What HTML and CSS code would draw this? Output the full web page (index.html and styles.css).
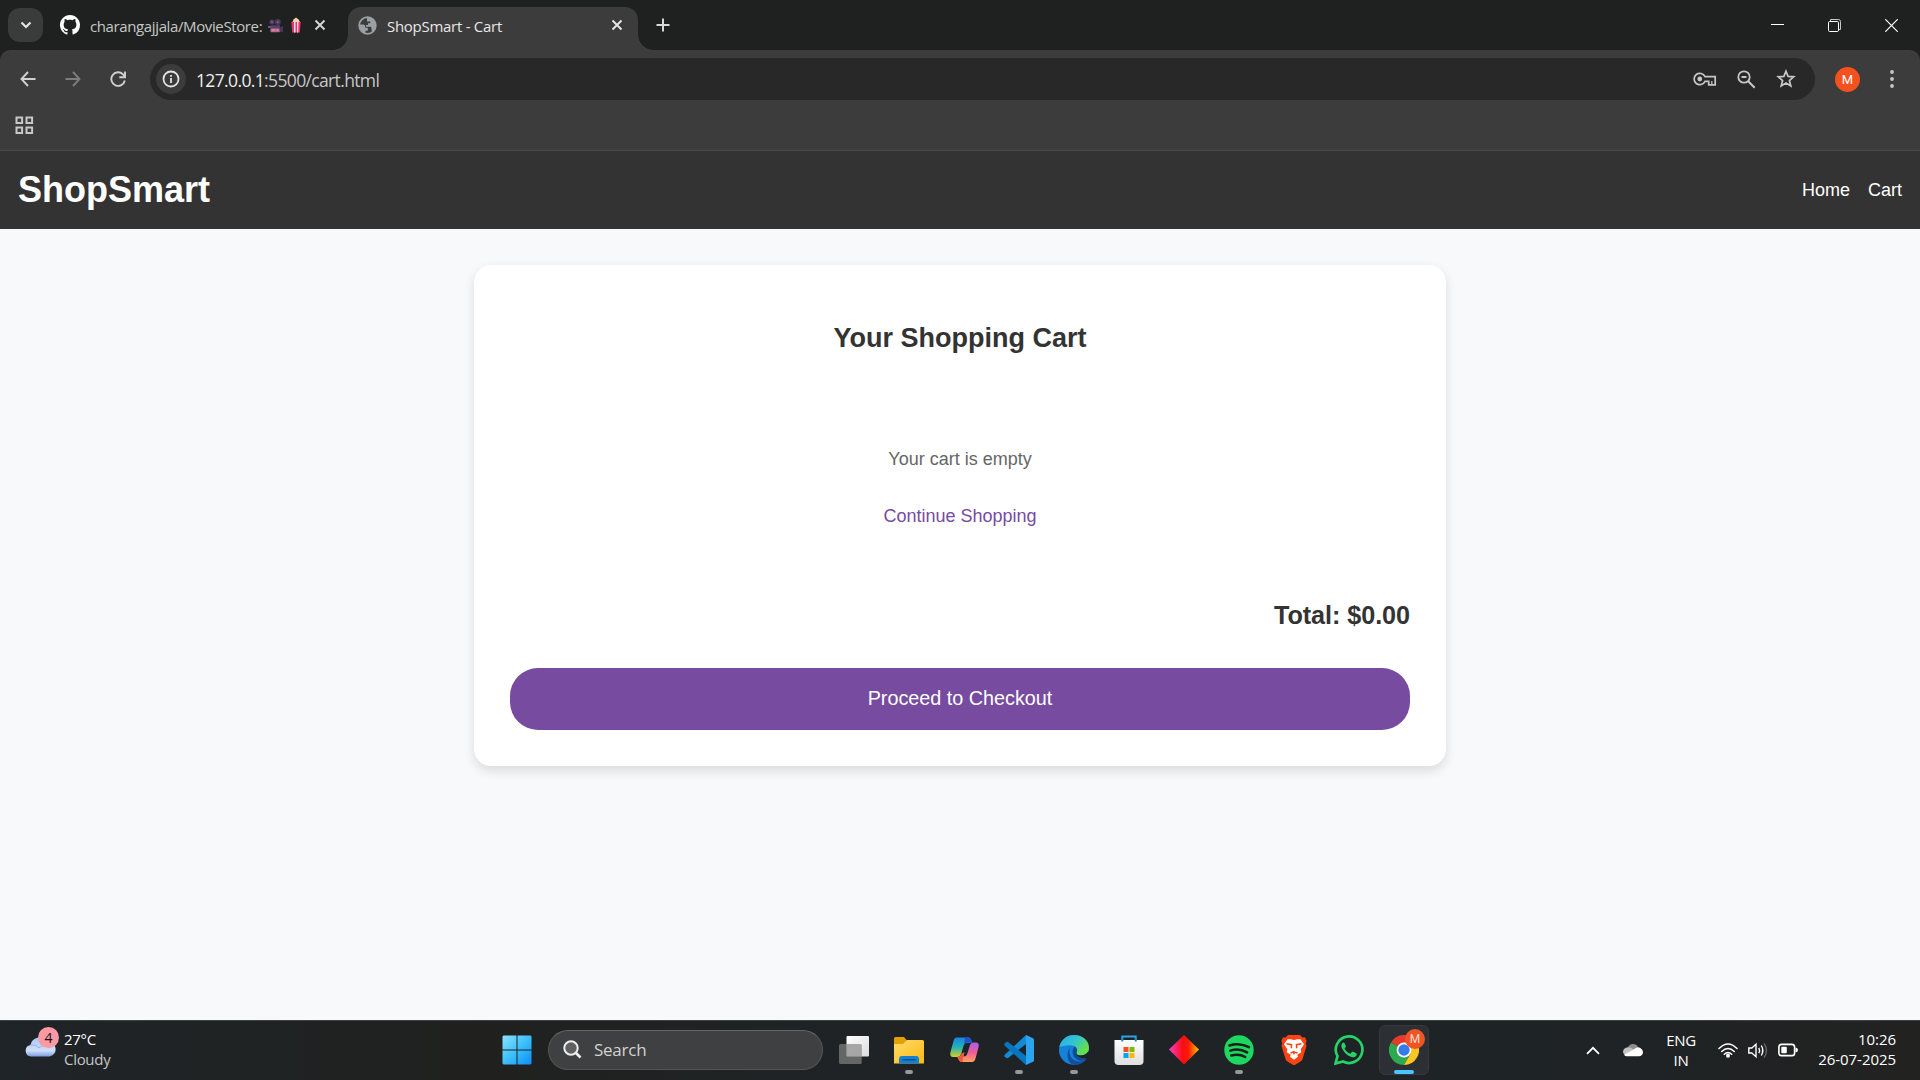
FILE: index.html
```html
<!DOCTYPE html>
<html lang="en">
<head>
<meta charset="utf-8">
<title>ShopSmart - Cart</title>
<link rel="stylesheet" href="styles.css">
</head>
<body>
<div class="tabstrip">
  <div class="tab-search"><svg width="12" height="8" viewBox="0 0 12 8"><path d="M1.5 1.5 6 6l4.500-4.500" fill="none" stroke="#e3e3e3" stroke-width="2.200"/></svg></div>
  <div class="tab tab-idle">
    <svg class="github" width="20" height="20" viewBox="0 0 16 16"><path fill="#fff" d="M8 0C3.580 0 0 3.580 0 8c0 3.540 2.290 6.530 5.470 7.590.4.070.55-.17.55-.38 0-.19-.01-.82-.01-1.490-2.010.37-2.530-.49-2.690-.94-.09-.23-.48-.94-.82-1.130-.28-.15-.68-.52-.01-.53.63-.01 1.080.58 1.230.82.72 1.210 1.870.87 2.330.66.07-.52.28-.87.51-1.070-1.780-.2-3.640-.89-3.640-3.950 0-.87.31-1.590.82-2.150-.08-.2-.36-1.020.08-2.120 0 0 .67-.21 2.200.82.64-.18 1.320-.27 2-.27s1.360.09 2 .27c1.530-1.040 2.200-.82 2.200-.82.44 1.100.16 1.920.08 2.120.51.56.82 1.270.82 2.150 0 3.070-1.870 3.750-3.650 3.950.29.25.54.73.54 1.480 0 1.070-.01 1.930-.01 2.200 0 .21.15.46.55.38A8 8 0 0 0 16 8c0-4.420-3.580-8-8-8z"/></svg>
    <span class="tab-text repo">charangajjala/MovieStore:</span>
    <svg class="camera" width="15" height="14" viewBox="0 0 15 14"><circle cx="4" cy="3" r="2.600" fill="#4b3b61"/><circle cx="9.800" cy="3" r="3" fill="#4b3b61"/><circle cx="4" cy="3" r=".9" fill="#75668c"/><circle cx="9.800" cy="3" r="1" fill="#75668c"/><path d="M0 7h3v2H0z" fill="#6b5a80"/><rect x="2.500" y="6.300" width="9.500" height="4" fill="#594468"/><rect x="2.500" y="9.500" width="9.500" height="3.800" rx=".8" fill="#b7688c"/><path d="M4 11h3M8.500 11h2" stroke="#f09bb0" stroke-width="1.200"/><path d="M11.500 8.500 15 7v6.500l-3.500-1z" fill="#45375a"/></svg>
    <svg class="popcorn" width="10" height="16" viewBox="0 0 10 16"><path d="M1 6 2.500 2.500 5 .5l2.500 2L9.500 6z" fill="#f6d3a2"/><path d="M.3 5h9.400L8.800 15.500H1.200z" fill="#e9326a"/><path d="M3 5h1.500v10.500H3zM6 5h1.500l-.3 10.500H6z" fill="#f6dfe9"/></svg>
    <svg class="close1" width="12" height="12" viewBox="0 0 12 12"><path d="M1.500 1.500l9 9m0-9l-9 9" stroke="#d5d7d6" stroke-width="1.900"/></svg>
  </div>
  <div class="tab tab-active">
    <svg width="19" height="19" viewBox="0 0 19 19"><circle cx="9.500" cy="9.500" r="8.300" fill="none" stroke="#9aa0a6" stroke-width="1.800"/><path fill="#9aa0a6" d="M9 1.500h3.500C16 3 17.500 6 17.500 9.500c0 2.500-1 4.500-2.500 6l-1.500-1v-2.500q0-1.200-1.300-1.200H8V9h2V7.300h2.200V5.400H9V3.500z"/><path fill="#9aa0a6" d="M1.500 8.500h3.700q2 0 2 2v1.200h2.600v3H7.500v2.600C4 16.500 1.500 13 1.500 8.500z"/></svg>
    <span class="tab-text cart-tab">ShopSmart - Cart</span>
    <svg class="close2" width="12" height="12" viewBox="0 0 12 12"><path d="M1.500 1.500l9 9m0-9l-9 9" stroke="#e6e8e7" stroke-width="1.900"/></svg>
  </div>
  <svg class="plus" width="14" height="14" viewBox="0 0 14 14"><path d="M7 .5v13M.5 7h13" stroke="#d8dad9" stroke-width="2"/></svg>
  <div class="window-controls">
    <svg width="13" height="13" viewBox="0 0 13 13"><path d="M0 5.500h13" stroke="#fff"/></svg>
    <svg width="13" height="13" viewBox="0 0 13 13"><path d="M2.500 2V.5h8a2 2 0 0 1 2 2v8H11" fill="none" stroke="#c9c9c9"/><rect x=".5" y="2.500" width="10" height="10" rx="1.200" fill="none" stroke="#fff"/></svg>
    <svg width="13" height="13" viewBox="0 0 13 13"><path d="M.3.3l12.400 12.400M12.700.3.3 12.700" stroke="#fff" stroke-width="1.200"/></svg>
  </div>
</div>
<div class="toolbar-wrap">
<div class="toolbar">
  <div class="nav-row">
    <svg width="16" height="16" viewBox="0 0 16 16"><path d="M8 1 1.500 8 8 15M1.500 8H15.500" fill="none" stroke="#d0d0d0" stroke-width="1.900"/></svg>
    <svg width="16" height="16" viewBox="0 0 16 16"><path d="M8 1l6.500 7L8 15M14.500 8H.5" fill="none" stroke="#7d7d7d" stroke-width="1.900"/></svg>
    <svg width="16" height="16" viewBox="0 0 16 16"><path d="M14.800 9.500A6.800 6.800 0 1 1 13 3.300L15 5.500" fill="none" stroke="#d0d0d0" stroke-width="1.900"/><path d="M15 .5V6.300H9.300" fill="none" stroke="#d0d0d0" stroke-width="1.900"/></svg>
    <div class="omnibox">
      <div class="site-info"><svg width="18" height="18" viewBox="0 0 18 18"><circle cx="9" cy="9" r="7.500" fill="none" stroke="#e3e3e3" stroke-width="1.800"/><path d="M9 8v5M9 5v1.800" stroke="#e3e3e3" stroke-width="1.800"/></svg></div>
      <span class="url"><b>127.0.0.1</b>:5500/cart.html</span>
      <div class="omni-icons">
        <svg width="24" height="14" viewBox="0 0 24 14"><path d="M12 4.600a5.700 5.700 0 1 0 0 4.800h3.700V12.800h6.500V4.600z" fill="none" stroke="#c7c7c7" stroke-width="1.700"/><circle cx="6.800" cy="7" r="2.400" fill="#c7c7c7"/><path d="M18.800 9v3.500" stroke="#c7c7c7" stroke-width="1.200"/></svg>
        <svg width="19" height="19" viewBox="0 0 19 19"><circle cx="7" cy="7" r="5.700" fill="none" stroke="#c7c7c7" stroke-width="1.800"/><path d="M4.500 7h5M11.200 11.200l6.500 6.500" stroke="#c7c7c7" stroke-width="2"/></svg>
        <svg width="20" height="20" viewBox="0 0 20 20"><path d="M10 2.200l2.100 5.200 5.600.4-4.300 3.700 1.400 5.500-4.800-3-4.800 3 1.400-5.500L2.300 7.800l5.600-.4z" fill="none" stroke="#c7c7c7" stroke-width="1.700"/></svg>
      </div>
    </div>
    <div class="avatar">M</div>
    <svg class="menu" width="4" height="18" viewBox="0 0 4 18"><g fill="#c7c7c7"><circle cx="2" cy="2" r="1.900"/><circle cx="2" cy="9" r="1.900"/><circle cx="2" cy="16" r="1.900"/></g></svg>
  </div>
  <div class="bookmarks"><svg width="19" height="19" viewBox="0 0 19 19"><g fill="none" stroke="#c7c7c7" stroke-width="2"><path d="M1.500 1.500h5.600v5.600H1.500zM11.500 1.500h5.600v5.600h-5.600zM1.500 11.500h5.600v5.600H1.500zM11.500 11.500h5.600v5.600h-5.600z"/></g></svg></div>
</div>
</div>
<header class="site-header">
  <h1>ShopSmart</h1>
  <nav><a>Home</a><a>Cart</a></nav>
</header>
<main class="page">
  <section class="card">
    <h2>Your Shopping Cart</h2>
    <p class="empty">Your cart is empty</p>
    <a class="continue">Continue Shopping</a>
    <div class="total">Total: $0.00</div>
    <button class="checkout">Proceed to Checkout</button>
  </section>
</main>
<footer class="taskbar">
  <div class="weather">
    <div class="weather-icon">
      <svg width="31" height="21" viewBox="0 0 31 21"><defs><linearGradient id="cl" x1="0" y1="0" x2="0" y2="1"><stop offset="0" stop-color="#a9c8f3"/><stop offset=".7" stop-color="#cfdefa"/><stop offset="1" stop-color="#7b9be0"/></linearGradient></defs><path d="M6 20.500a5.800 5.800 0 0 1-.5-11.500A9.500 9.500 0 0 1 23 6a7.300 7.300 0 0 1 1.500 14.500z" fill="url(#cl)"/><path d="M5.500 9c4-.5 7 1 8.500 3 2-2 5-3 8-2" fill="none" stroke="#8fb0ea" stroke-width="1"/></svg>
      <span class="count">4</span>
    </div>
    <div class="weather-text"><span>27°C</span><span class="dim">Cloudy</span></div>
  </div>
  <div class="apps">
    <div class="app start"><svg width="30" height="30" viewBox="0 0 30 30"><defs><linearGradient id="w" x1="0" y1="0" x2="1" y2="1"><stop offset="0" stop-color="#8be3ff"/><stop offset=".5" stop-color="#3cc0fb"/><stop offset="1" stop-color="#0b8ef5"/></linearGradient></defs><path fill="url(#w)" d="M1.500.5h13v14H.5V1.500zM15.500.5h13l1 1v13h-14zM.5 15.500h14v14h-13l-1-1zM15.500 15.500h14v13l-1 1h-13z"/></svg></div>
    <div class="search"><svg width="19" height="19" viewBox="0 0 19 19"><circle cx="8" cy="8" r="6.700" fill="#606060" stroke="#eee" stroke-width="2"/><path d="M13 13l4.500 4.500" stroke="#eee" stroke-width="2.600"/></svg><span>Search</span></div>
    <div class="app"><svg width="30" height="30" viewBox="0 0 30 30"><defs><linearGradient id="tv" x1="0" y1="0" x2="1" y2="1"><stop offset="0" stop-color="#fff"/><stop offset="1" stop-color="#dcdcdc"/></linearGradient></defs><rect x="7.500" y="1" width="22.500" height="20.500" rx="1" fill="url(#tv)"/><rect x="0" y="9" width="22.700" height="20" rx="1.500" fill="#777" fill-opacity=".8"/><path d="M7.500 9h15.200v12.500H7.500z" fill="#b3b3b3" fill-opacity=".65"/></svg></div>
    <div class="app running"><svg width="30" height="30" viewBox="0 0 30 30"><defs><linearGradient id="f" x1="0" y1="0" x2="1" y2="1"><stop offset="0" stop-color="#ffdb6b"/><stop offset="1" stop-color="#fdb912"/></linearGradient></defs><path d="M0 3.500Q0 2 1.500 2H10l3 3.500V12H0z" fill="#e3a008"/><path d="M0 9h9l4-4h15.500Q30 5 30 6.500V28.500H0z" fill="url(#f)"/><path d="M5 28.500V24q0-3 3-3h14q3 0 3 3v4.500z" fill="#1380d0"/><path d="M9 24.700h12" stroke="#0b4f96" stroke-width="1.500" stroke-linecap="round"/></svg></div>
    <div class="app"><svg width="29" height="27" viewBox="0 0 29 27"><defs><linearGradient id="c1" x1="0" y1="0" x2="0" y2="1"><stop offset="0" stop-color="#1585e8"/><stop offset=".5" stop-color="#23b3b4"/><stop offset="1" stop-color="#d8ce25"/></linearGradient><linearGradient id="c2" x1="0" y1="0" x2="0" y2="1"><stop offset="0" stop-color="#a75fed"/><stop offset=".5" stop-color="#ef5a9a"/><stop offset="1" stop-color="#ffa45a"/></linearGradient></defs><path d="M6 1.500H18q3 0 4 5l-4.500.5q-3-.5-4 3l-2.200 7.500Q10 21 7 21H3Q-.5 21 .5 16L3.500 5Q4.500 1.500 6 1.500z" fill="url(#c1)"/><path d="M15 1.500h3q3 0 4 5h-5q-2 0-3 2z" fill="#234fd0"/><path d="M23 6.500h3q3.500 0 2.500 5l-3 11Q24.500 26 22 26H12Q9 26 7.500 21q3 0 4.500-3.500l2.500-1.500-1 4.500q3 0 4-3.500l2.500-8q1-2.500 3-2.500z" fill="url(#c2)"/><path d="M7.500 21q3 0 4.500-4l2 .5-1.500 6.500.5 2Q9 26 7.500 21z" fill="#f0573b"/></svg></div>
    <div class="app running"><svg width="30" height="30" viewBox="0 0 30 30"><path d="M22 0 1 19.500q-1.500 1.500 0 2.500l1.500 1q1 .5 2-.3L22 9z" fill="#1489d4"/><path d="M22 30 1 11Q-.5 9.500 1 8l1.500-1q1-.5 2 .2L22 21z" fill="#0876be"/><path d="M22 0l7 3.200q1 .5 1 1.500v20.600q0 1-1 1.500L22 30z" fill="#29a5f1"/></svg></div>
    <div class="app running"><svg width="30" height="30" viewBox="0 0 30 30"><defs><linearGradient id="e1" x1="0" y1="0" x2="1" y2=".6"><stop offset="0" stop-color="#2aabee"/><stop offset=".5" stop-color="#30c4d4"/><stop offset="1" stop-color="#6be13f"/></linearGradient></defs><circle cx="15" cy="15" r="15" fill="#1582da"/><path d="M.4 12C2 4.500 8 0 15 0c9 0 15 6 15 12.500 0 5-4 8-8.500 8-3 0-5-1.200-4-2.800 1.300-1.800 1-6.200-4-7.200C8.500 9.500 3 11 .4 12z" fill="url(#e1)"/><path d="M11 12.500c-2 7 1.500 13.500 9 14q4 .2 7-2C24 28.500 20 30 15 30 9 29 6 19 11 12.500z" fill="#124f9c"/><path d="M17.500 17.700c-1 1.600 1 2.800 4 2.800q5 0 8-4-.2 5-3 8c-8 4-13-3-13-8 0-3 2-5 2-5 3 1.500 3 4.500 2 6.200z" fill="#114b93"/><path d="M17.800 17.300c-1 1.900 1 3.200 4 3.200q5 0 8-4.500l.2 5-2.500 2.500q-4.500 0-8-1.800T17.800 17.300z" fill="#1f2326"/></svg></div>
    <div class="app"><svg width="30" height="30" viewBox="0 0 30 30"><defs><linearGradient id="st" x1="0" y1="0" x2="0" y2="1"><stop offset="0" stop-color="#fff"/><stop offset="1" stop-color="#dedede"/></linearGradient></defs><path d="M8.300 6V1.500h13.400V6" fill="none" stroke="#29a6e5" stroke-width="2"/><path d="M.5 5H29.500V26q0 4-4 4H4.500q-4 0-4-4z" fill="url(#st)"/><path d="M8.300 3v3.500M21.700 3v3.500" stroke="#1a83c5" stroke-width="2"/><path fill="#f25022" d="M9.500 12h5v5h-5z"/><path fill="#7fba00" d="M15.500 12h5v5h-5z"/><path fill="#00a4ef" d="M9.500 18h5v5h-5z"/><path fill="#ffb900" d="M15.500 18h5v5h-5z"/></svg></div>
    <div class="app"><svg width="30" height="30" viewBox="0 0 30 30"><defs><linearGradient id="d"><stop offset="0" stop-color="#fb3fd0"/><stop offset=".45" stop-color="#fb0d12"/><stop offset=".65" stop-color="#fb1b05"/><stop offset="1" stop-color="#ffc400"/></linearGradient></defs><path fill="url(#d)" d="M15 0 30 14.500 15 29.500 0 14.500z"/></svg></div>
    <div class="app running"><svg width="30" height="30" viewBox="0 0 30 30"><circle cx="15" cy="15" r="14.700" fill="#1ed760"/><path d="M5.500 10.500c6-2 14-1.300 19.500 1.700M6.300 15.600c5.500-1.600 12-1 16.800 1.800M7.300 20.500c5-1.300 10-.8 14 1.500" fill="none" stroke="#182019" stroke-linecap="round" stroke-width="2.500"/></svg></div>
    <div class="app"><svg width="26" height="30" viewBox="0 0 26 30"><path d="M7 0h12l2.500 2.500L24 2.300l1.500 3.500-.7 3L25.500 11l-4 13q-.5 1.500-2 2.500L13 30.500 6.500 26.500q-1.500-1-2-2.500L.5 11l.7-2.200-.7-3L2 2.300l2.500.2z" fill="#fb4213"/><path d="M13 5l3.500-.8h3l3.500 5-3.300 5 .6 3-4 2.500.7 2-4 3-4-3 .7-2-4-2.500.6-3L3 9.200l3.500-5h3z" fill="#fff"/><path d="M5.500 8.700l5 1-.2 3.500M20.500 8.700l-5 1 .2 3.500M9.500 18l3.500-1.300 3.500 1.300M13 16v3.500" fill="none" stroke="#fb4213" stroke-width="1.500"/></svg></div>
    <div class="app"><svg width="30" height="30" viewBox="0 0 30 30"><path d="M1.500 28.500l2-7.300A13.300 13.300 0 1 1 9 26.500z" fill="none" stroke="#25d366" stroke-width="2.700"/><path d="M10 7.500q-1.500-.2-2.500 2c-1 3 3 8 5 9.700 2.300 2 5.500 3.500 8 2.800 1.500-.5 2.500-1.500 2.200-3.500l-4-2q-.7 0-2.200 2.300c-2.500-.7-5-3-6-5.300q1.700-1.700 1.500-2.500z" fill="#25d366"/></svg></div>
    <div class="app current"><svg width="30" height="30" viewBox="0 0 30 30"><path d="M15 15 2 7.500A15 15 0 0 1 28 7.500z" fill="#e33b2e"/><path d="M15 15l6.500 3.700L15 30A15 15 0 0 1 2 7.500z" fill="#2da94f"/><path d="M15 7.500h13A15 15 0 0 1 15 30l6.500-11.200z" fill="#fcc521"/><circle cx="15" cy="15" r="7.400" fill="#fff"/><circle cx="15" cy="15" r="5.700" fill="#377be9"/></svg><span class="profile">M</span></div>
  </div>
  <div class="tray">
    <svg class="up" width="14" height="9" viewBox="0 0 14 9"><path d="M1 7.800l6-6 6 6" fill="none" stroke="#fff" stroke-width="1.800"/></svg>
    <svg class="onedrive" width="20" height="14" viewBox="0 0 20 14"><path d="M5 4.500A5.500 5.500 0 0 1 15 4l-1 4H5z" fill="#8e8e8e"/><path d="M5 4.200q2.500 0 5.500 2.300l-7 6Q.2 11.500 0 8.800.2 4.800 5 4.200z" fill="#c2c2c2"/><path d="M15 4.300q4.500.8 5 5-.3 3.700-4 4H4q-2 0-3-1.500L10.500 6.500Q12.500 4.500 15 4.300z" fill="#fff"/></svg>
    <div class="lang"><span>ENG</span><span>IN</span></div>
    <div class="status">
      <svg width="20" height="15" viewBox="0 0 20 15"><g fill="none" stroke="#fff" stroke-width="1.500" stroke-linecap="round"><path d="M1 5.500q9-9 18 0M3.700 8.500q6.300-6 12.600 0M6.300 11.300q3.700-3.300 7.400 0"/></g><circle cx="10" cy="12.800" r="2" fill="#fff"/></svg>
      <svg width="20" height="17" viewBox="0 0 20 17"><g fill="none" stroke="#fff" stroke-width="1.400"><path d="M.8 6v5h3L8 14.700V2.300L3.800 6z"/><path d="M10.800 5.800q1.500 2.700 0 5.400M13.300 3.500q3 5 0 10"/><path d="M16 1.300q5 7.200 0 14.400" stroke="#666"/></g></svg>
      <svg width="20" height="14" viewBox="0 0 20 14"><rect x=".9" y="1.400" width="15.700" height="11.200" rx="2.700" fill="none" stroke="#fff" stroke-width="1.600"/><rect x="3.300" y="3.700" width="5.500" height="6.600" rx="1" fill="#fff"/><path d="M17.500 4.500q2.500.3 2.500 2.500t-2.500 2.500z" fill="#fff"/></svg>
    </div>
    <div class="clock"><span>10:26</span><span>26-07-2025</span></div>
  </div>
</footer>
</body>
</html>
```
FILE: styles.css
```css
* { box-sizing: border-box; }
body { margin: 0; width: 1920px; height: 1080px; overflow: hidden; display: flex; flex-direction: column; background: #f8f9fb; font-family: "Liberation Sans", Arial, sans-serif; }
svg { display: block; flex: none; }
h1, h2, p { margin: 0; }

/* Browser tabs */
.tabstrip { height: 50px; flex: none; background: #1f2120; display: flex; align-items: center; padding-left: 8px; font-family: "Open Sans", "Noto Sans", sans-serif; }
.tab-search { width: 35px; height: 34px; border-radius: 12px; background: #3a3b3b; display: flex; align-items: center; justify-content: center; }
.tab { display: flex; align-items: center; }
.tab-idle { width: 305px; padding-left: 17px; }
.tab-text { font-size: 15px; line-height: 20px; padding-top: 1px; white-space: nowrap; }
.repo { margin-left: 10px; width: 178px; color: #c5c8c6; letter-spacing: -0.380px; }
.camera { margin-top: 2px; }
.popcorn { margin-left: 8px; }
.close1 { margin-left: 13px; }
.tab-active { position: relative; align-self: flex-end; width: 290px; height: 43px; padding: 0 15px 7px 10px; border-radius: 13px 13px 0 0; background: #3c3c3c; }
.tab-active::before, .tab-active::after { content: ""; position: absolute; bottom: 0; width: 15px; height: 15px; }
.tab-active::before { left: -15px; background: radial-gradient(circle at 0 0, transparent 14.500px, #3c3c3c 15px); }
.tab-active::after { right: -15px; background: radial-gradient(circle at 100% 0, transparent 14.500px, #3c3c3c 15px); }
.cart-tab { margin-left: 10px; color: #e8e8e8; letter-spacing: -0.280px; }
.close2 { margin-left: auto; }
.plus { margin-left: 18px; }
.window-controls { margin-left: auto; padding-right: 22px; display: flex; gap: 44px; }

/* Address bar */
.toolbar-wrap { flex: none; background: #1f2120; }
.toolbar { height: 101px; background: #3c3c3c; border-bottom: 1px solid #4a4a4a; border-radius: 10px 10px 0 0; }
.nav-row { height: 58px; display: flex; align-items: center; padding: 0 26px 0 20px; }
.nav-row > svg + svg { margin-left: 29px; }
.nav-row > .menu { margin-left: auto; }
.omnibox { margin-left: 24px; width: 1665px; height: 42px; border-radius: 21px; background: #282828; display: flex; align-items: center; padding: 0 19px 0 6px; }
.site-info { width: 30px; height: 30px; border-radius: 50%; background: #3c3c3c; display: flex; align-items: center; justify-content: center; }
.url { margin-left: 10px; padding-top: 1px; color: #c7c7c7; font: 17.500px/24px "Open Sans", "Noto Sans", sans-serif; letter-spacing: -0.640px; }
.url b { font-weight: 400; color: #f0f0f0; }
.omni-icons { margin-left: auto; display: flex; align-items: center; gap: 20px; }
.avatar { margin-left: 20px; width: 25px; height: 25px; border-radius: 50%; background: #f4511e; color: #fff; text-align: center; font: 13px/25px Roboto, sans-serif; }
.bookmarks { padding: 8px 15px; }

/* Shop page */
.site-header { height: 78px; flex: none; background: #333; color: #fff; display: flex; align-items: center; justify-content: space-between; padding: 0 18px; }
.site-header h1 { font-size: 36px; line-height: 42px; }
.site-header nav { display: flex; gap: 18px; font-size: 18px; line-height: 22px; }
.page { flex: 1; padding-top: 36px; }
.card { width: 972px; height: 501px; margin: 0 auto; padding: 55px 36px 36px; border-radius: 17px; background: #fff; box-shadow: 0 4.500px 11px rgba(0, 0, 0, .12); display: flex; flex-direction: column; color: #333; text-align: center; }
.card h2 { font-size: 27px; line-height: 36px; }
.empty { margin-top: 89px; color: #666; font-size: 18px; line-height: 28px; }
.continue { margin-top: 29px; color: #764ba2; font-size: 18px; line-height: 28px; }
.total { margin-top: 70px; text-align: right; font-size: 25.200px; line-height: 30px; font-weight: 700; letter-spacing: -0.060px; }
.checkout { margin-top: 38px; height: 62px; padding: 0 0 2px; border: 0; border-radius: 28px; background: #764ba0; color: #fff; font: 19.800px "Liberation Sans", Arial, sans-serif; }

/* Taskbar */
.taskbar { height: 60px; flex: none; display: flex; border-top: 1px solid #3c4143; background: linear-gradient(90deg, #1f2428, #20211f 25%, #1f2326 45%, #1e2326 80%, #222221); color: #fff; font-family: "Open Sans", "Noto Sans", sans-serif; font-size: 15px; line-height: 20px; }
.weather { width: 492px; padding: 8px 0 0 25px; display: flex; }
.weather-icon { position: relative; width: 39px; padding-top: 7px; }
.count { position: absolute; left: 13px; top: -2px; width: 21px; height: 21px; border-radius: 50%; background: #ff99a4; color: #111; font-size: 14px; line-height: 21px; text-align: center; }
.weather-text { display: flex; flex-direction: column; letter-spacing: -0.300px; }
.weather-text .dim { color: #c5c6c7; }
.apps { display: flex; align-items: center; gap: 5px; padding-bottom: 2px; }
.app { position: relative; width: 50px; height: 50px; border-radius: 6px; display: flex; align-items: center; justify-content: center; flex: none; }
.search { width: 275px; height: 40px; border-radius: 20px; border: 1px solid #555; border-top-color: #666; background: #3f4041; display: flex; align-items: center; gap: 12px; padding-left: 14px; margin-left: 1px; margin-right: 1px; color: #d2d2d2; font-size: 17px; letter-spacing: -0.250px; }
.running::after, .current::after { content: ""; position: absolute; left: 21px; bottom: 1px; width: 8px; height: 4px; border-radius: 2px; background: #969798; }
.current { background: #2c2f33; border: 1px solid #36393c; }
.current::after { left: 14px; bottom: 0; width: 20px; background: #4cc2ff; }
.profile { position: absolute; left: 25px; top: 3px; width: 20px; height: 20px; border-radius: 50%; background: #ef5424; color: #fbd9ce; font: 12px/20px Roboto, sans-serif; text-align: center; }
.tray { margin-left: auto; padding: 0 24px 1px 0; display: flex; align-items: center; }
.onedrive { margin-left: 23px; }
.lang, .clock { display: flex; flex-direction: column; height: 42px; letter-spacing: -0.300px; }
.lang { width: 32px; margin-left: 22px; text-align: center; padding-top: 1px; }
.status { display: flex; align-items: center; gap: 10px; margin-left: 21px; }
.clock { width: 79px; margin-left: 19px; align-items: flex-end; white-space: nowrap; letter-spacing: -0.050px; }
```
